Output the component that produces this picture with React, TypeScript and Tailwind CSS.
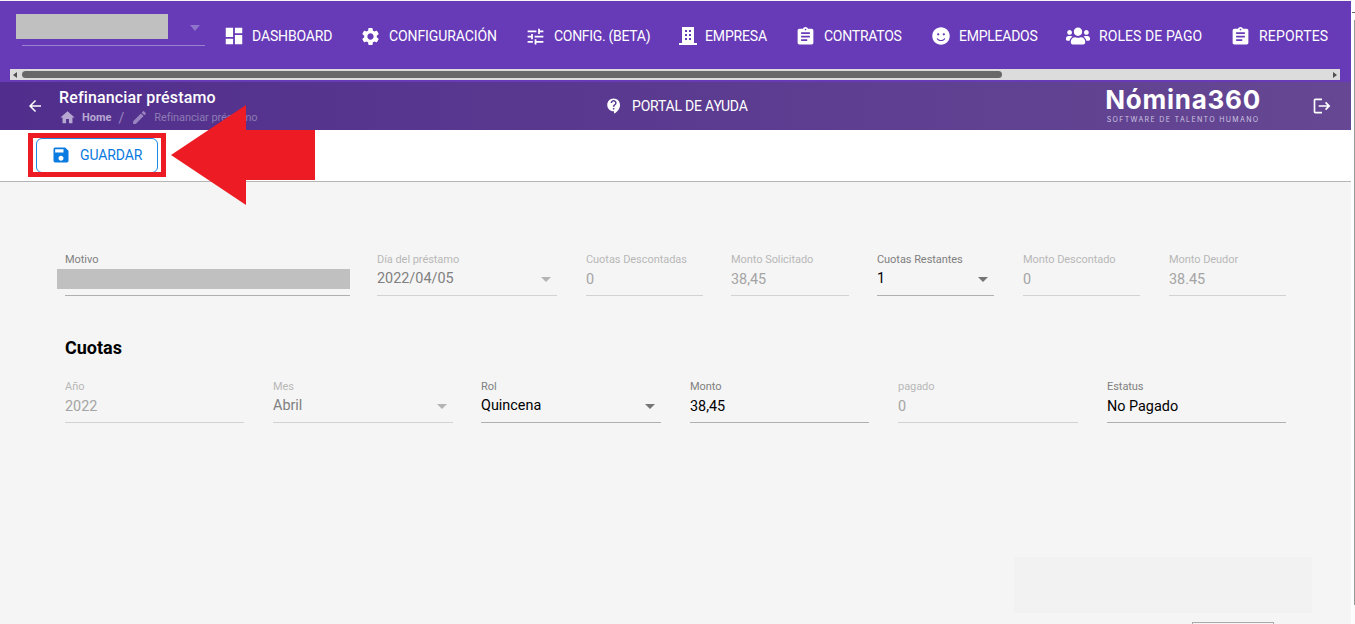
import React from "react";
import { MdDashboard, MdSettings, MdTune, MdAssignment, MdContactSupport, MdSave, MdHome, MdEdit, MdArrowBack, MdLogout } from "react-icons/md";
import { FaUsers, FaSmile } from "react-icons/fa";

function Building({ size }: { size: number }) {
  return (
    <svg width={size} height={size} viewBox="0 0 18 18" fill="white">
      <path fillRule="evenodd" d="M3 0h12v16h3v2H0v-2h3V0zm3 3v2h2V3H6zm4 0v2h2V3h-2zM6 7v2h2V7H6zm4 0v2h2V7h-2zm-4 4v2h2v-2H6zm4 0v2h2v-2h-2z" />
    </svg>
  );
}

const nav = [
  { t: "DASHBOARD", I: MdDashboard, w: "w-[137px]", c: "w-[29px]", s: 22, k: "tracking-[-0.15px]" },
  { t: "CONFIGURACIÓN", I: MdSettings, w: "w-[165px]", c: "w-[29px]", s: 21, k: "tracking-[-0.1px]" },
  { t: "CONFIG. (BETA)", I: MdTune, w: "w-[152px]", c: "w-[29px]", s: 21, k: "tracking-[-0.3px]" },
  { t: "EMPRESA", I: Building, w: "w-[118px]", c: "w-[28px] pl-[2px]", s: 18, k: "tracking-[-0.15px]" },
  { t: "CONTRATOS", I: MdAssignment, w: "w-[135px]", c: "w-[29px]", s: 21, k: "tracking-[-0.25px]" },
  { t: "EMPLEADOS", I: FaSmile, w: "w-[134px]", c: "w-[29px] pl-[2px]", s: 18, k: "tracking-[-0.25px]" },
  { t: "ROLES DE PAGO", I: FaUsers, w: "w-[166px]", c: "w-[35px] pl-[2px]", s: 24, k: "tracking-[0.08px]" },
  { t: "REPORTES", I: MdAssignment, w: "w-[110px]", c: "w-[29px]", s: 21, k: "tracking-[0.2px]" },
];

function Field({ label, value, w, disabled, dark, select }: { label: string; value: string; w: string; disabled?: boolean; dark?: boolean; select?: boolean }) {
  return (
    <div className={`${w} h-[44px] pt-[1px] border-b ${disabled ? "border-[#d2d2d2]" : "border-[#b0b0b0]"}`}>
      <div className={`text-[11px] leading-[14px] tracking-[-0.05px] ${disabled ? "text-[#b8b8b8]" : "text-[#808080]"}`}>{label}</div>
      <div className={`flex items-center justify-between pr-[6px] text-[14.4px] leading-[20px] ${select ? "mt-[2px]" : "mt-[3px]"} ${dark ? "text-black" : disabled && !select ? "text-[#a4a4a4]" : "text-[#808080]"}`}>
        <span>{value || "\u00a0"}</span>
        {select && <span className={`h-0 w-0 border-x-[5px] border-t-[5px] border-x-transparent ${dark ? "border-t-[#757575]" : "border-t-[#b4b4b4]"}`} />}
      </div>
    </div>
  );
}

export default function App() {
  return (
    <div className="relative h-[624px] w-[1355px] overflow-hidden bg-white font-['Roboto',sans-serif]">
      <div className="w-[1351px] h-full flex flex-col bg-[#f5f5f5]">
        <header className="mt-px h-[81px] shrink-0 bg-[#673ab7] flex flex-col">
          <div className="h-[68px] flex items-center">
            <div className="w-[223px] shrink-0 pl-[16px] relative self-stretch">
              <div className="mt-[13px] h-[25px] w-[152px] bg-[#c0c0c0]" />
              <div className="ml-[6px] mt-[6px] w-[183px] border-b border-[#9a82cf]" />
              <span className="absolute left-[190px] top-[24px] h-0 w-0 border-x-[5px] border-t-[6px] border-x-transparent border-t-[#8f75c9]" />
            </div>
            <nav className="flex items-center text-white text-[14px] mt-[2px]">
              {nav.map(({ t, I, w, c, s, k }) => (
                <div key={t} className={`${w} flex items-center shrink-0 whitespace-nowrap`}>
                  <span className={`${c} flex`}><I size={s} /></span>
                  <span className={k}>{t}</span>
                </div>
              ))}
            </nav>
          </div>
          <div className="ml-[10px] w-[1330px] h-[11px] bg-[#dcdcdc] flex items-center relative">
            <span className="ml-[3px] h-0 w-0 border-y-[3.5px] border-r-[4px] border-y-transparent border-r-[#505050]" />
            <div className="ml-[5px] w-[980px] h-[7px] rounded-full bg-[#686868]" />
            <span className="ml-auto mr-[3px] h-0 w-0 border-y-[3.5px] border-l-[4px] border-y-transparent border-l-[#505050]" />
          </div>
        </header>

        <div className="h-[48px] shrink-0 bg-gradient-to-r from-[#512e8d] to-[#654793] flex items-center text-white">
          <div className="w-[59px] pl-[26px] flex"><MdArrowBack size={18} /></div>
          <div className="w-[546px] mt-[3px]">
            <div className="text-[16px] leading-[18px] font-medium tracking-[0.15px]">Refinanciar préstamo</div>
            <div className="flex items-center text-[11px] leading-[14px] mt-[2px] text-[#b7a8d2]">
              <MdHome size={17} /><span className="ml-[6px] font-bold">Home</span>
              <span className="mx-[7px] text-[14px] text-[#9a85c0]">/</span>
              <MdEdit size={17} className="text-[#9a85c0]" /><span className="ml-[6px] text-[#8e7bb4] tracking-[-0.08px]">Refinanciar préstamo</span>
            </div>
          </div>
          <div className="flex items-center text-[14px] tracking-[-0.2px]"><MdContactSupport size={18} /><span className="ml-[9px]">PORTAL DE AYUDA</span></div>
          <div className="ml-[353px] w-[165px] text-center -mt-[2px]">
            <div className="font-['Inter',sans-serif] text-[26px] leading-[26px] font-bold tracking-[0.75px]">Nómina360</div>
            <div className="mt-[2px] font-['Inter',sans-serif] text-[7px] leading-[9px] tracking-[1.35px] text-[#cfc5e0]">SOFTWARE DE TALENTO HUMANO</div>
          </div>
          <div className="ml-[46px] flex"><MdLogout size={20} /></div>
        </div>

        <div className="h-[52px] shrink-0 bg-white border-b border-[#b5b5b5] pl-[28px] pt-[3px]">
          <div className="w-[138px] h-[44px] border-[5px] border-[#ed1c24] flex items-center overflow-hidden">
            <button className="ml-[3px] w-[122px] h-[35px] shrink-0 rounded-[6px] border border-[#1e88e5] flex items-center pl-[14px] text-[#0a7be0] text-[14px] tracking-[-0.1px]">
              <MdSave size={20} /><span className="ml-[9px]">GUARDAR</span>
            </button>
          </div>
        </div>

        <main className="flex-1 px-[65px] pt-[70px]">
          <div className="grid grid-cols-[312px_209px_145px_146px_146px_146px_117px]">
            <div className="relative w-[285px]">
              <Field label="Motivo" value="" w="w-[285px]" />
              <div className="absolute left-[-8px] top-[17px] h-[20px] w-[293px] bg-[#c0c0c0]" />
            </div>
            <Field label="Día del préstamo" value="2022/04/05" w="w-[180px]" disabled select />
            <Field label="Cuotas Descontadas" value="0" w="w-[117px]" disabled />
            <Field label="Monto Solicitado" value="38,45" w="w-[118px]" disabled />
            <Field label="Cuotas Restantes" value="1" w="w-[117px]" dark select />
            <Field label="Monto Descontado" value="0" w="w-[117px]" disabled />
            <Field label="Monto Deudor" value="38.45" w="w-[117px]" disabled />
          </div>
          <h2 className="mt-[41px] text-[18px] leading-[22px] font-bold text-black">Cuotas</h2>
          <div className="mt-[20px] grid grid-cols-[208px_208px_209px_208px_209px_179px]">
            <Field label="Año" value="2022" w="w-[179px]" disabled />
            <Field label="Mes" value="Abril" w="w-[180px]" disabled select />
            <Field label="Rol" value="Quincena" w="w-[180px]" dark select />
            <Field label="Monto" value="38,45" w="w-[179px]" dark />
            <Field label="pagado" value="0" w="w-[180px]" disabled />
            <Field label="Estatus" value="No Pagado" w="w-[179px]" dark />
          </div>
          <div className="mt-[134px] ml-[949px] w-[298px] h-[56px] bg-[#f2f2f2]" />
          <div className="mt-[9px] ml-[1127px] w-[82px] h-[8px] border border-[#aaa]" />
        </main>
      </div>
      <div className="absolute right-0 top-[20px] h-[585px] w-px bg-[#999]" />
      <div className="absolute right-0 top-[12px] h-px w-[3px] bg-[#666]" />
      <svg className="absolute left-[171px] top-[105px]" width="145" height="100" viewBox="0 0 145 100">
        <polygon points="0,50 75,0 75,25 144,25 144,75 75,75 75,100" fill="#ed1c24" />
      </svg>
    </div>
  );
}
